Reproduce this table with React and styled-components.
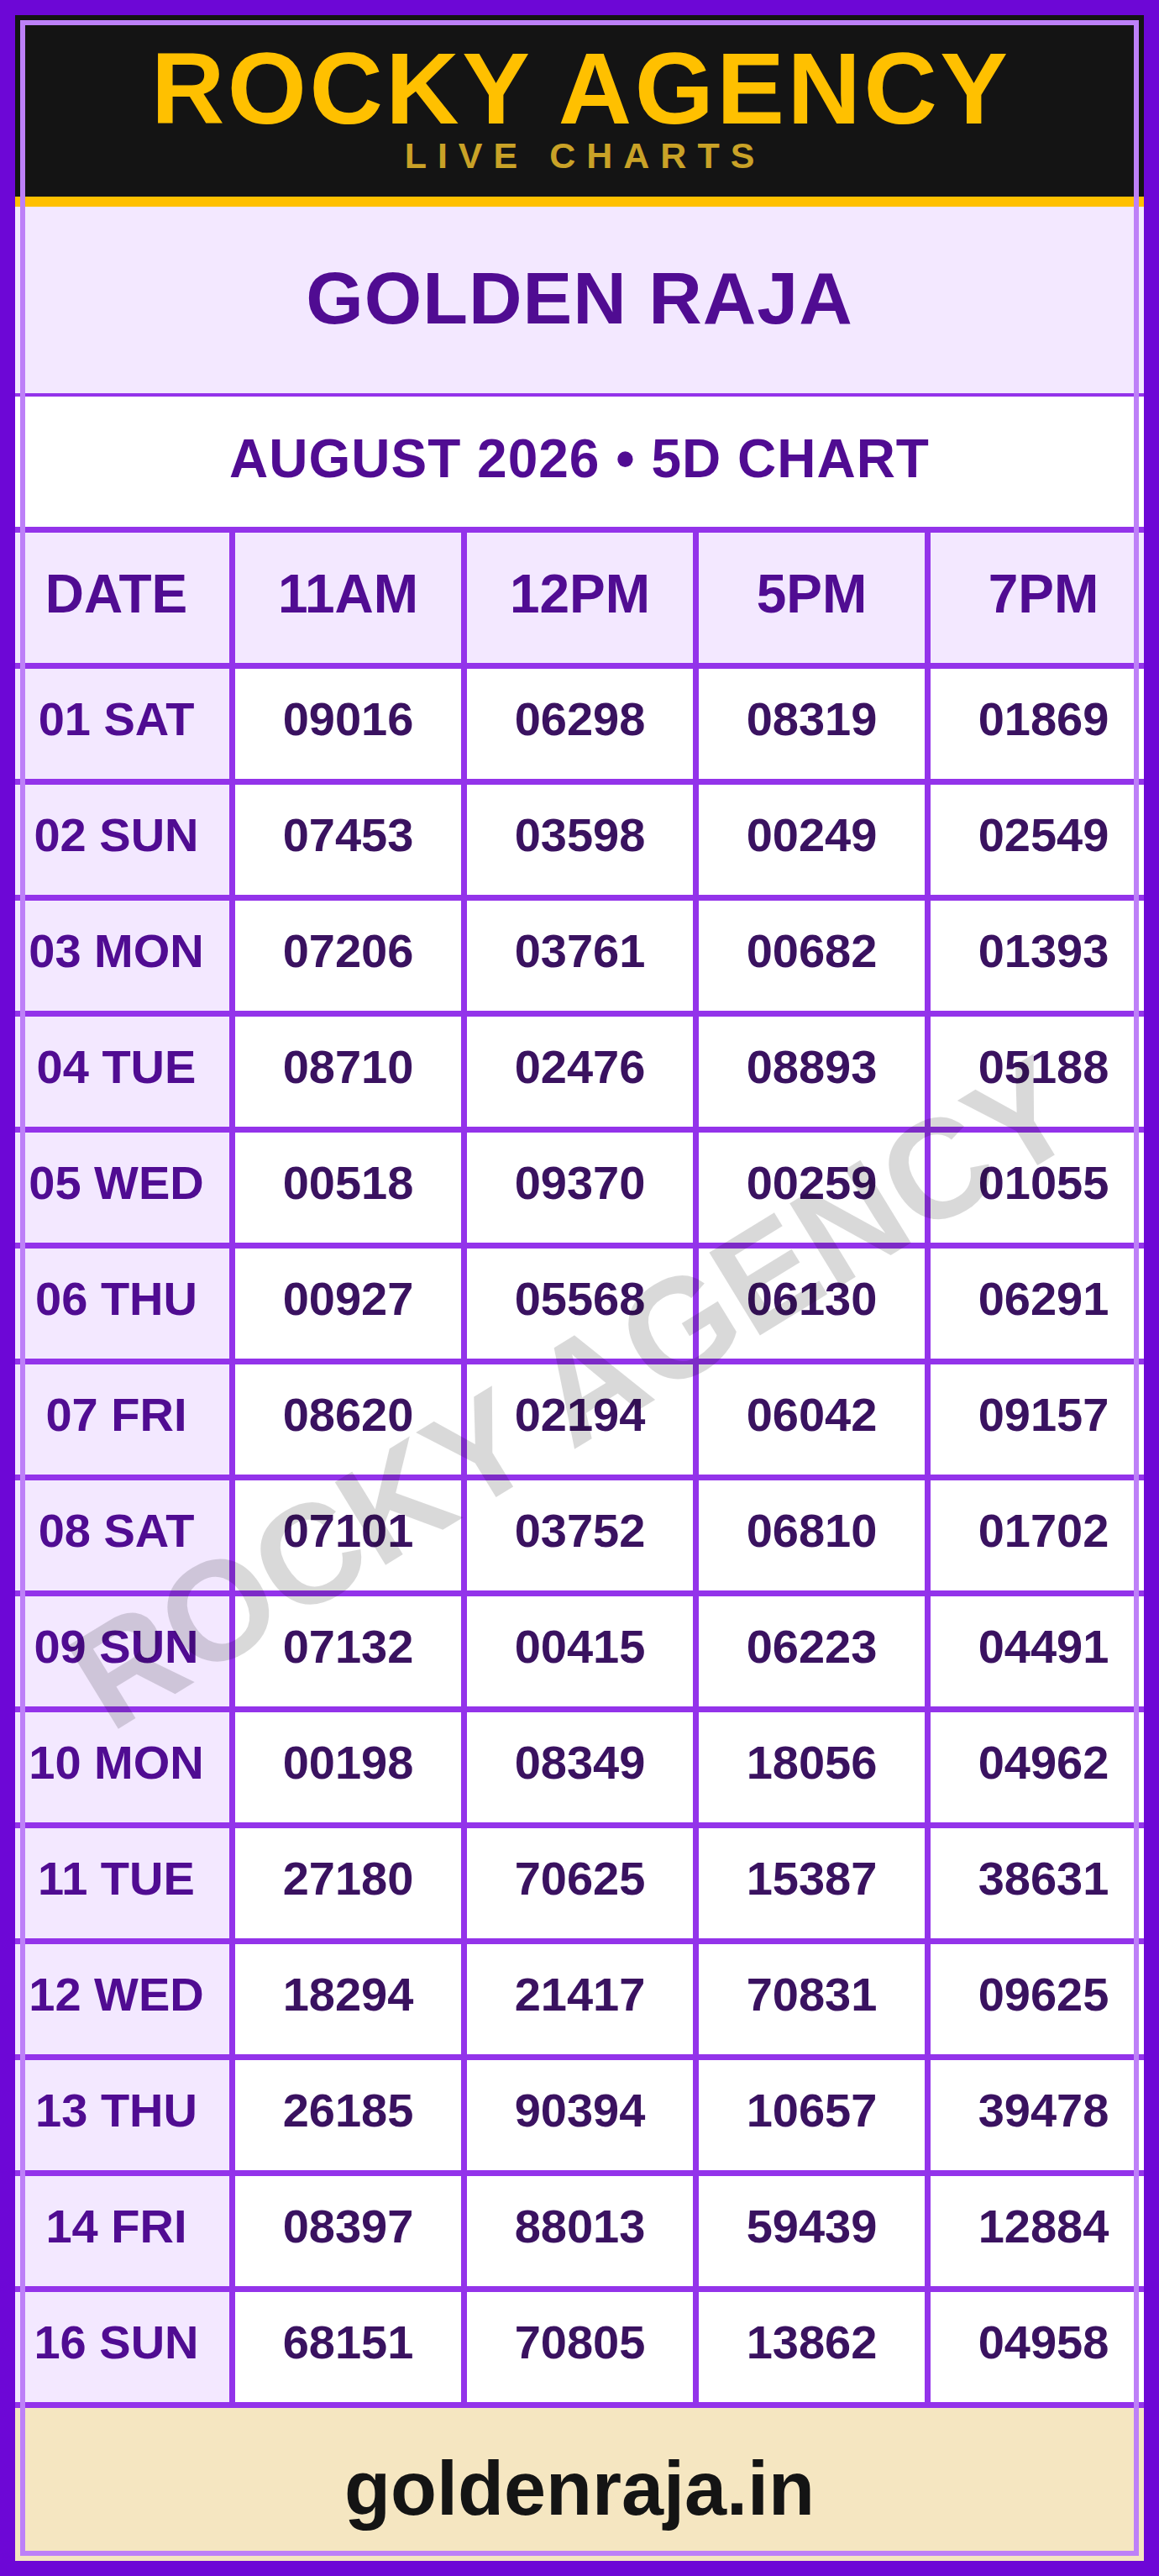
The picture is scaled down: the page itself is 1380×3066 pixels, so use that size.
import React from "react";
import styled, { createGlobalStyle } from "styled-components";

const GlobalStyle = createGlobalStyle`
  html, body {
    margin: 0;
    padding: 0;
  }
  body {
    background: #6d07d6;
    padding: 18px;
    font-family: "Liberation Sans", Arial, sans-serif;
  }
`;

const Card = styled.div`
  position: relative;
  width: 1344px;
  overflow: hidden;
  background: #ffffff;
`;

const Frame = styled.div`
  position: absolute;
  top: 6px;
  left: 6px;
  right: 6px;
  bottom: 6px;
  border: 6px solid #bd80f8;
  pointer-events: none;
  z-index: 3;
`;

const Header = styled.header`
  height: 186px;
  padding-top: 30px;
  background: #141414;
  border-bottom: 12px solid #ffc000;
  display: flex;
  flex-direction: column;
  align-items: center;
`;

const Brand = styled.h1`
  margin: 0;
  font-size: 121px;
  line-height: 0.95;
  font-weight: 700;
  letter-spacing: 3.5px;
  padding-left: 3.5px;
  color: #ffc000;
`;

const Tagline = styled.div`
  margin-top: 1px;
  font-size: 43px;
  line-height: 1;
  font-weight: 700;
  letter-spacing: 13px;
  padding-left: 13px;
  color: #c9a227;
`;

const Banner = styled.div`
  display: flex;
  align-items: center;
  justify-content: center;
  box-sizing: border-box;
  height: ${(p) => p.$height}px;
  padding-bottom: ${(p) => p.$shift}px;
  background: ${(p) => p.$bg};
  border-bottom: ${(p) => (p.$line ? `${p.$line}px solid #9333ea` : "none")};
  color: #500c92;
  font-weight: 700;
  font-size: ${(p) => p.$size}px;
  letter-spacing: 1px;
  line-height: 1;
`;

const Grid = styled.div`
  display: grid;
  grid-template-columns: repeat(5, 269px);
  gap: 7px;
  width: 1373px;
  margin-left: -14px;
  padding: 7px 0;
  background: #9333ea;
`;

const Cell = styled.div`
  display: flex;
  align-items: center;
  justify-content: center;
  box-sizing: border-box;
  height: ${(p) => (p.$head ? 155 : 131)}px;
  padding-bottom: ${(p) => (p.$head ? 9 : 12)}px;
  background: ${(p) => (p.$head || p.$date ? "#f3e8ff" : "#ffffff")};
  color: ${(p) => (p.$head || p.$date ? "#500c92" : "#3a1260")};
  font-size: ${(p) => (p.$head ? 64 : 56)}px;
  font-weight: 700;
  line-height: 1;
  white-space: nowrap;
`;

const Footer = styled.footer`
  height: 182px;
  box-sizing: border-box;
  padding-top: 9px;
  display: flex;
  align-items: center;
  justify-content: center;
  background: #f5e6c1;
  color: #141414;
  font-size: 90px;
  font-weight: 700;
  line-height: 1;
`;

const Watermark = styled.div`
  position: absolute;
  left: 664px;
  top: 1640px;
  transform: translate(-50%, -50%) rotate(-31.5deg);
  font-size: 168px;
  font-weight: 700;
  line-height: 1;
  white-space: nowrap;
  color: rgba(0, 0, 0, 0.15);
  pointer-events: none;
  z-index: 2;
`;

const slots = ["11AM", "12PM", "5PM", "7PM"];

const rows = [
  ["01 SAT", "09016", "06298", "08319", "01869"],
  ["02 SUN", "07453", "03598", "00249", "02549"],
  ["03 MON", "07206", "03761", "00682", "01393"],
  ["04 TUE", "08710", "02476", "08893", "05188"],
  ["05 WED", "00518", "09370", "00259", "01055"],
  ["06 THU", "00927", "05568", "06130", "06291"],
  ["07 FRI", "08620", "02194", "06042", "09157"],
  ["08 SAT", "07101", "03752", "06810", "01702"],
  ["09 SUN", "07132", "00415", "06223", "04491"],
  ["10 MON", "00198", "08349", "18056", "04962"],
  ["11 TUE", "27180", "70625", "15387", "38631"],
  ["12 WED", "18294", "21417", "70831", "09625"],
  ["13 THU", "26185", "90394", "10657", "39478"],
  ["14 FRI", "08397", "88013", "59439", "12884"],
  ["16 SUN", "68151", "70805", "13862", "04958"],
];

const App = () => {
  return (
    <>
      <GlobalStyle />
      <Card>
        <Header>
          <Brand>ROCKY AGENCY</Brand>
          <Tagline>LIVE CHARTS</Tagline>
        </Header>

        <Banner $height={226} $line={4} $shift={4} $bg="#f3e8ff" $size={88}>
          GOLDEN RAJA
        </Banner>
        <Banner $height={155} $shift={8} $bg="#ffffff" $size={64}>
          AUGUST 2026 • 5D CHART
        </Banner>

        <Grid>
          <Cell $head>DATE</Cell>
          {slots.map((s) => (
            <Cell key={s} $head>
              {s}
            </Cell>
          ))}
          {rows.map((row) =>
            row.map((val, i) => (
              <Cell key={row[0] + i} $date={i === 0}>
                {val}
              </Cell>
            ))
          )}
        </Grid>

        <Footer>goldenraja.in</Footer>

        <Watermark>ROCKY AGENCY</Watermark>
        <Frame />
      </Card>
    </>
  );
};

export default App;
